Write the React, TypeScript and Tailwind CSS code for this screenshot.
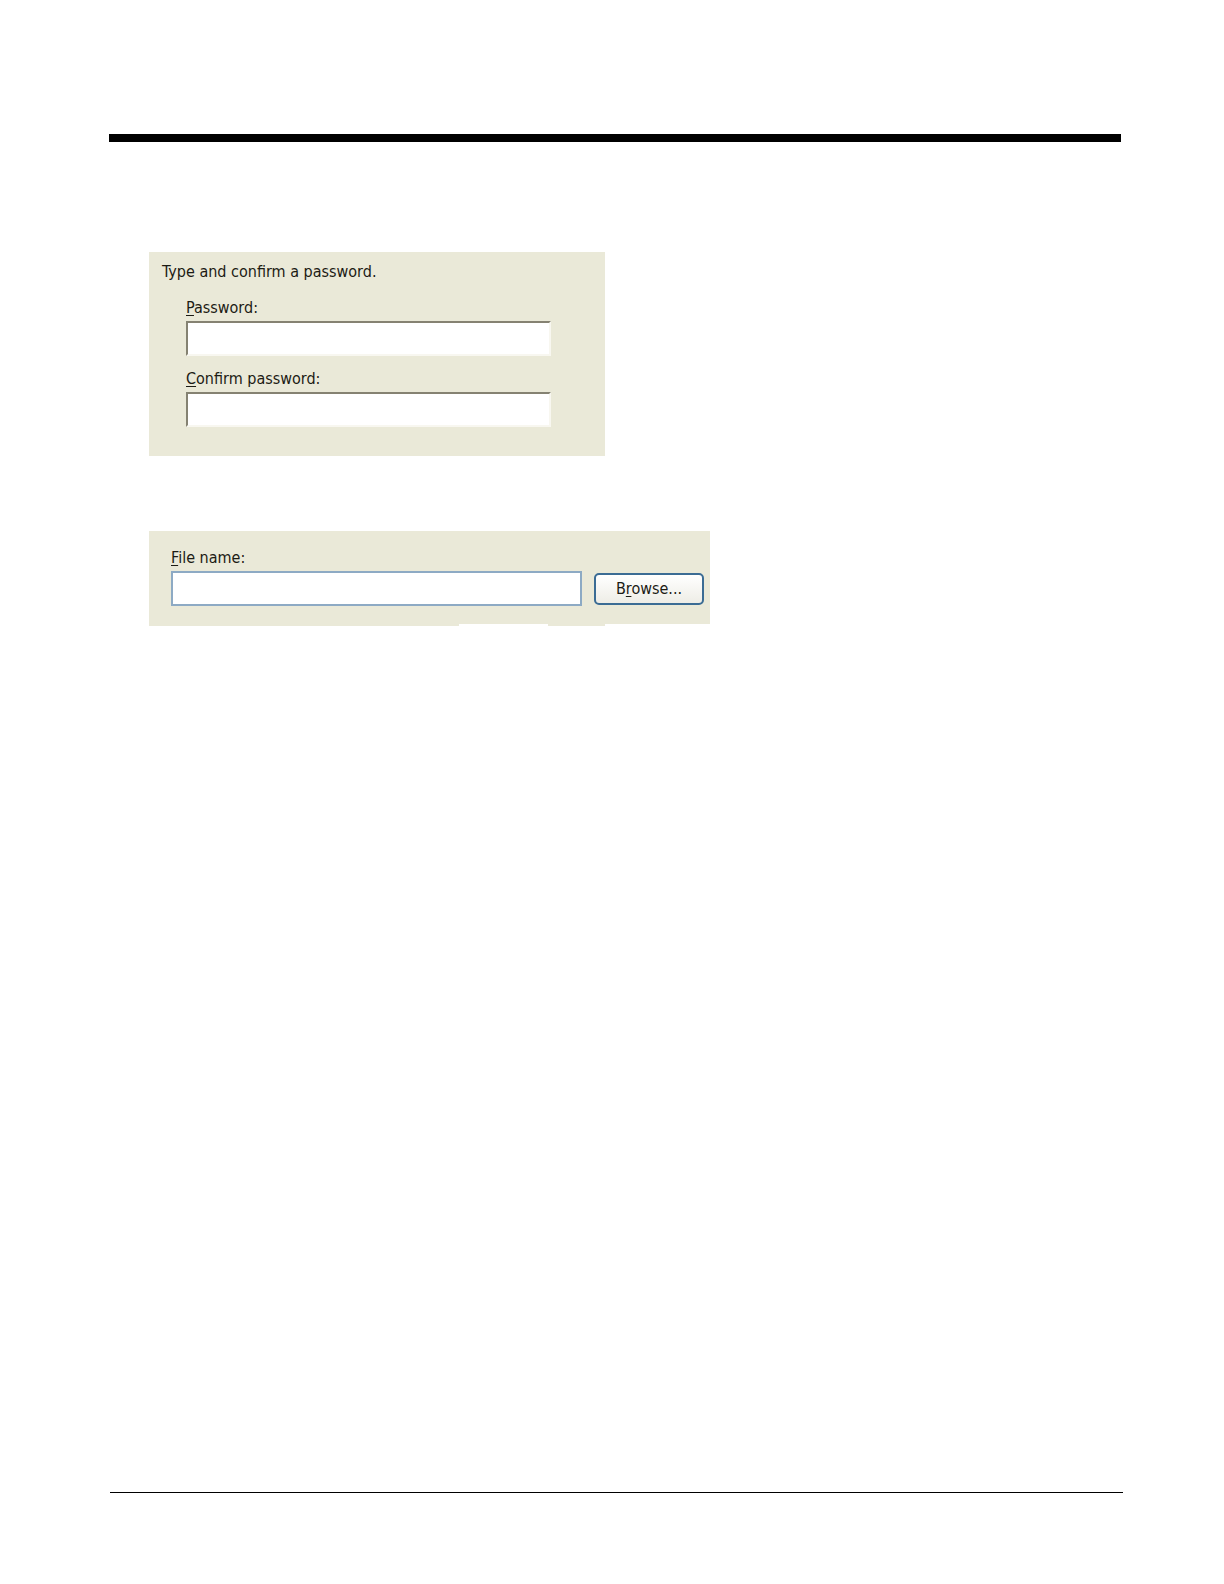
import type { ReactNode } from "react";

function PasswordField({ id, children }: { id: string; children: ReactNode }) {
  return (
    <div className="flex flex-col">
      <label htmlFor={id} className="leading-[22px]">
        {children}
      </label>
      <input
        id={id}
        type="password"
        className="mt-0.5 h-[35px] w-full border-2 border-t-[#858272] border-r-[#f8f7f0] border-b-[#f8f7f0] border-l-[#858272] bg-white px-2 outline-none"
      />
    </div>
  );
}

function Key({ children }: { children: ReactNode }) {
  return <span className="underline decoration-1 underline-offset-2">{children}</span>;
}

export default function App() {
  return (
    <div className="flex min-h-screen flex-col bg-white pt-[134px] pb-[91px] font-['DejaVu_Sans_Condensed','DejaVu_Sans',sans-serif] text-base text-[#1c1b14]">
      <header className="mr-[103px] ml-[109px] h-2 bg-black" />

      <main className="flex-1 px-[149px] pt-[110px]">
        <form className="w-full max-w-[456px] bg-[#eae9d8] pt-[9px] pr-[54px] pb-[29px] pl-[13px]">
          <p className="leading-[22px]">Type and confirm a password.</p>
          <div className="flex flex-col gap-3 pt-3.5 pl-6">
            <PasswordField id="password">
              <Key>P</Key>assword:
            </PasswordField>
            <PasswordField id="confirm">
              <Key>C</Key>onfirm password:
            </PasswordField>
          </div>
        </form>

        <form className="mt-[75px] w-full max-w-[561px]">
          <div className="bg-[#eae9d8] pt-4 pr-1.5 pb-[18px] pl-[22px]">
            <label htmlFor="file" className="block leading-[22px]">
              <Key>F</Key>ile name:
            </label>
            <div className="mt-0.5 flex items-center gap-3">
              <input
                id="file"
                type="text"
                className="h-[35px] min-w-0 flex-1 border-2 border-[#8daac4] bg-white px-2 outline-none"
              />
              <button
                type="button"
                className="h-8 w-[110px] rounded-[5px] border-2 border-[#3b6c94] bg-linear-to-b from-white to-[#eeede6] leading-[22px]"
              >
                B<Key>r</Key>owse...
              </button>
            </div>
          </div>
          <div className="flex h-0.5 gap-[89px]">
            <div className="w-[310px] bg-[#eae9d8]" />
            <div className="w-[57px] bg-[#eae9d8]" />
          </div>
        </form>
      </main>

      <footer className="mr-[101px] ml-[110px] h-px bg-black" />
    </div>
  );
}
